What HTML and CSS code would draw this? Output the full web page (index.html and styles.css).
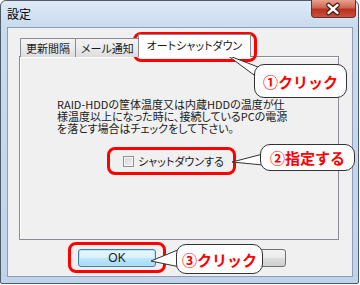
FILE: index.html
```html
<!DOCTYPE html>
<html lang="ja">
<head>
    <meta charset="UTF-8">
    <title>設定</title>
    <link rel="stylesheet" href="styles.css">
</head>
<body>
    <div class="screen">
        <div class="window">
            <div class="titlebar">
                <span class="title">設定</span>
                <div class="close-btn">
                    <svg width="45" height="18" viewBox="0 0 45 18">
                        <path d="M18 5 L27 13 M27 5 L18 13" stroke="#4a1c1c" stroke-width="5" stroke-linecap="round"/>
                        <path d="M18 5 L27 13 M27 5 L18 13" stroke="#ffffff" stroke-width="2.6" stroke-linecap="round"/>
                    </svg>
                </div>
            </div>

            <div class="client">
                <div class="tabs">
                    <div class="tab">更新間隔</div>
                    <div class="tab">メール通知</div>
                    <div class="tab active">オートシャットダウン</div>
                </div>
                <div class="tab-panel">
                    <p class="notice">
                        <span>RAID-HDDの筐体温度又は内蔵HDDの温度が仕</span>
                        <span>様温度以上になった時に、接続しているPCの電源</span>
                        <span>を落とす場合はチェックをして下さい。</span>
                    </p>
                    <label class="check-row">
                        <span class="checkbox"></span>
                        <span>シャットダウンする</span>
                    </label>
                </div>
                <div class="buttons">
                    <div class="btn btn-default">OK</div>
                    <!-- キャンセル（吹き出しで隠れている） -->
                    <div class="btn btn-hidden"></div>
                </div>
            </div>
        </div>

        <!-- 注釈 -->
        <div class="mark mark-tab"></div>
        <div class="mark mark-check"></div>
        <div class="mark mark-ok"></div>

        <svg class="tails" width="360" height="285" viewBox="0 0 360 285">
            <polygon points="227,55 258,67 258,78" />
            <polygon points="232,162 263,154 263,165" />
            <polygon points="151,261 180,249 180,267" />
        </svg>

        <div class="bubble bubble-1">①クリック</div>
        <div class="bubble bubble-2">②指定する</div>
        <div class="bubble bubble-3">③クリック</div>
    </div>
</body>
</html>
```

FILE: styles.css
```css
* {
    margin: 0;
    padding: 0;
    box-sizing: border-box;
}

body {
    background: #ffffff;
    font-family: 'Noto Sans CJK JP', 'Liberation Sans', sans-serif;
    font-size: 11px;
    color: #1a1a1a;
}

.screen {
    position: relative;
    width: 360px;
    height: 285px;
    overflow: hidden;
}

.window {
    width: 359px;
    height: 284px;
    border: 1px solid #4e5b6b;
    border-radius: 6px 6px 2px 2px;
    background: linear-gradient(180deg, #dfeaf6 0, #c9dbef 26px, #bfd4eb 100%);
    padding: 0 5px 6px 6px;
    display: flex;
    flex-direction: column;
}

.titlebar {
    height: 26px;
    display: flex;
    justify-content: space-between;
    align-items: flex-start;
}

.title {
    margin-top: 6px;
    font-size: 12px;
    line-height: 14px;
    color: #000;
}

.close-btn {
    width: 45px;
    height: 18px;
    margin-top: -1px;
    margin-right: -3px;
    border: 1px solid #6e2c2c;
    border-top: none;
    border-radius: 0 0 4px 4px;
    background: linear-gradient(180deg, #e8a190 0, #d0654f 45%, #b8321f 55%, #c9503a 100%);
    display: flex;
}

.close-btn svg {
    margin-left: -1px;
}

.client {
    flex: 1;
    border: 1px solid #8c9db3;
    background: #f0f0f0;
    display: flex;
    flex-direction: column;
}

.tabs {
    display: flex;
    align-items: flex-end;
    margin: 6px 0 -1px 12px;
    height: 23px;
    position: relative;
    z-index: 1;
}

.tab {
    height: 19px;
    padding: 0 5px;
    border: 1px solid #898c95;
    border-bottom: none;
    background: linear-gradient(180deg, #f3f3f3 0, #ebebeb 50%, #dcdcdc 100%);
    line-height: 18px;
    font-size: 11px;
    font-feature-settings: "palt";
    white-space: nowrap;
}

.tab + .tab {
    margin-left: -1px;
}

.tab.active {
    height: 23px;
    margin: 0 -2px;
    padding: 0 8px;
    background: #ffffff;
    line-height: 21px;
    position: relative;
    z-index: 2;
}

.tab-panel {
    margin-left: 11px;
    width: 320px;
    height: 184px;
    border: 1px solid #898c95;
    box-shadow: inset 1px 1px 0 #ffffff;
    background: #f0f0f0;
}

.notice {
    margin: 41px 0 0 37px;
    font-size: 11px;
    line-height: 12px;
    font-feature-settings: "palt";
}

.notice span {
    display: block;
    white-space: nowrap;
}

.check-row {
    display: flex;
    align-items: center;
    gap: 4px;
    margin: 21px 0 0 103px;
    font-size: 11px;
    line-height: 12px;
    font-feature-settings: "palt";
}

.checkbox {
    width: 11px;
    height: 11px;
    border: 1px solid #8f8f8f;
    background: linear-gradient(135deg, #d4d4d4 0, #f4f4f4 100%);
    box-shadow: inset 0 0 0 1px #f7f7f7;
}

.buttons {
    display: flex;
    gap: 52px;
    margin: 9px 0 0 70px;
}

.btn {
    width: 78px;
    height: 18px;
    border: 1px solid #707070;
    border-radius: 3px;
    background: linear-gradient(180deg, #f2f2f2 0, #ebebeb 50%, #dddddd 51%, #cfcfcf 100%);
    text-align: center;
    font-family: 'Liberation Sans', 'Noto Sans CJK JP', sans-serif;
    font-size: 12px;
    line-height: 16px;
}

.btn-default {
    border-color: #3c7fb1;
    background: linear-gradient(180deg, #eaf6fd 0, #d9f0fc 50%, #bee6fd 51%, #a7d9f5 100%);
    box-shadow: inset 0 0 0 1px #b6e3fa;
}

/* 注釈 */
.mark {
    position: absolute;
    border: 3px solid #ff0000;
    border-radius: 8px;
}

.mark-tab {
    left: 133px;
    top: 32px;
    width: 124px;
    height: 30px;
}

.mark-check {
    left: 107px;
    top: 147px;
    width: 129px;
    height: 28px;
}

.mark-ok {
    left: 68px;
    top: 242px;
    width: 98px;
    height: 31px;
}

.tails {
    position: absolute;
    left: 0;
    top: 0;
}

.tails polygon {
    fill: #ffffff;
    stroke: #333333;
    stroke-width: 1;
    stroke-linejoin: miter;
}

.bubble {
    position: absolute;
    background: #ffffff;
    border: 1px solid #333333;
    border-radius: 10px;
    color: #ff0000;
    font-weight: bold;
    font-size: 15px;
    display: flex;
    align-items: center;
    justify-content: center;
    white-space: nowrap;
}

.bubble-1 {
    left: 254px;
    top: 64px;
    width: 93px;
    height: 34px;
}

.bubble-2 {
    left: 260px;
    top: 144px;
    width: 95px;
    height: 27px;
}

.bubble-3 {
    left: 176px;
    top: 244px;
    width: 87px;
    height: 30px;
}
```
